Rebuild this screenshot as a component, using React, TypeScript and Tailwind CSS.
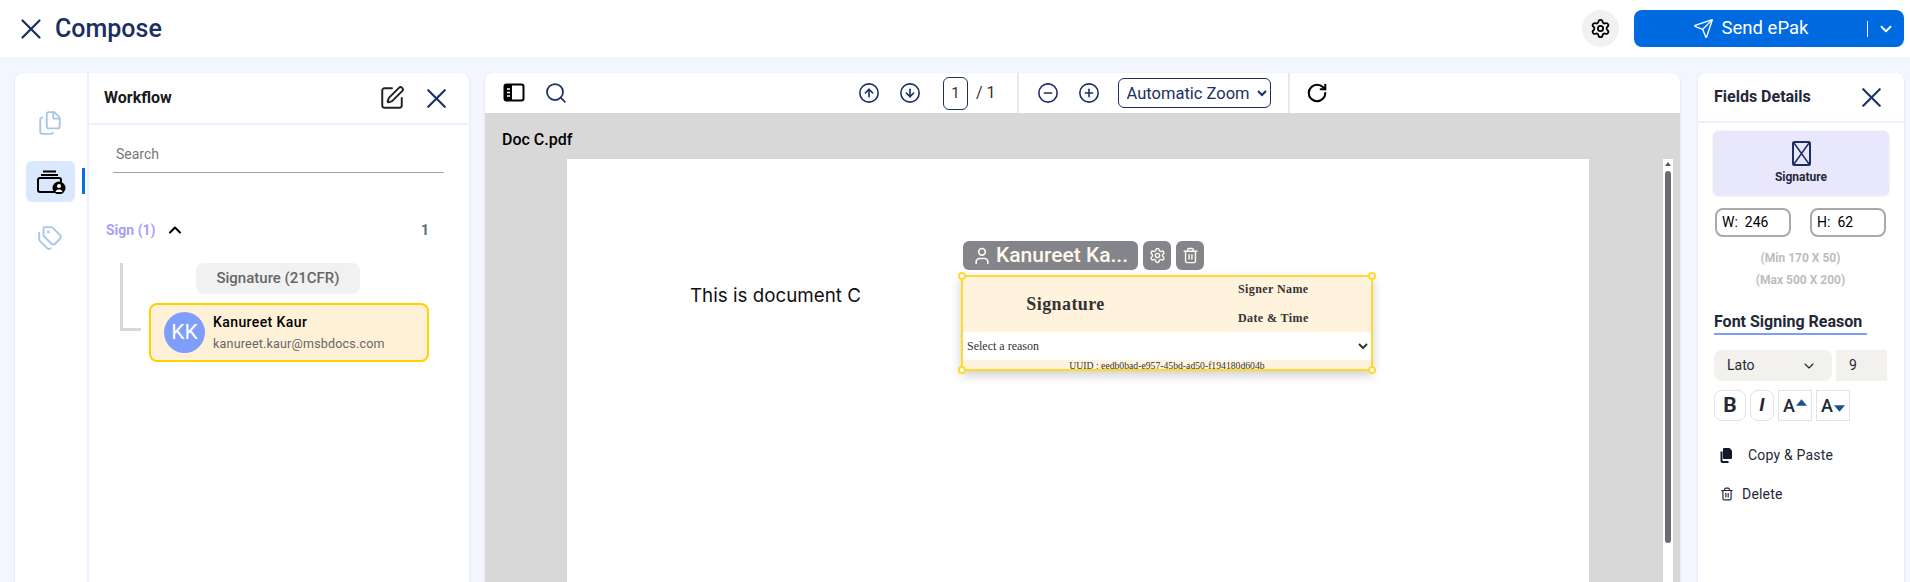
import { X, SquarePen, Files, Tags, Settings, Send, ChevronDown, ChevronUp, CircleArrowUp, CircleArrowDown, CircleMinus, CirclePlus, RotateCw, Search, User, Trash2 } from "lucide-react";

function Wallet() {
  return (
    <svg width="30" height="24" viewBox="0 0 30 24" fill="none" className="text-black">
      <path d="M7 1.500h13M5 5h17" stroke="currentColor" strokeWidth="2" />
      <path d="M20 22H4a2 2 0 0 1-2-2V10a2 2 0 0 1 2-2h19a2 2 0 0 1 2 2v2" stroke="currentColor" strokeWidth="2" />
      <circle cx="23" cy="18" r="6.500" fill="currentColor" />
      <circle cx="23" cy="16" r="2" fill="#fff" />
      <path d="M19.500 22c.500-2 2-2.500 3.500-2.500s3 .5 3.500 2.500z" fill="#fff" />
    </svg>
  );
}

function SidebarIcon() {
  return (
    <svg width="22" height="20" viewBox="0 0 22 20" fill="none">
      <rect x="1.500" y="1.500" width="19" height="16" rx="2" stroke="#000" strokeWidth="2" />
      <rect x="2" y="2" width="7" height="15" fill="#000" />
      <path d="M4 6h3M4 9.500h3M4 13h3" stroke="#fff" strokeWidth="1.500" />
    </svg>
  );
}

function PasteIcon() {
  return (
    <svg width="14" height="16" viewBox="0 0 14 16" fill="none">
      <path d="M5 1h5.500L13 3.500V11a1 1 0 0 1-1 1H5a1 1 0 0 1-1-1V2a1 1 0 0 1 1-1z" fill="#111827" />
      <path d="M2.500 4.500V14a1 1 0 0 0 1 1h6" stroke="#111827" strokeWidth="2" />
    </svg>
  );
}

function Caret({ up }: { up?: boolean }) {
  return (
    <svg width="11" height="7" viewBox="0 0 10 6">
      <path d={up ? "M5 0l5 6H0z" : "M0 0h10L5 6z"} fill="#1d4f91" />
    </svg>
  );
}

function ToolBtn({ children }: { children: React.ReactNode }) {
  return <span className="flex w-[41px] items-center justify-center text-[#1b2f63]">{children}</span>;
}

export default function App() {
  return (
    <div className="flex h-[582px] w-[1910px] flex-col overflow-hidden bg-[#f3f6fe] font-[family-name:Roboto] text-[#1f2937]">
      <header className="flex h-[57px] shrink-0 items-center bg-white pl-[14px] pr-[6px]">
        <X size={34} strokeWidth={1.600} className="text-[#1b2f63]" />
        <h1 className="ml-[7px] text-[25px] font-medium text-[#1b2f63]">Compose</h1>
        <span className="ml-auto flex h-[37px] w-[37px] items-center justify-center rounded-full bg-[#f1f1f1]">
          <Settings size={21} strokeWidth={2} className="text-black" />
        </span>
        <button className="ml-[15px] flex h-[37px] w-[270px] items-center rounded-lg bg-[#006be0] text-white">
          <span className="flex flex-1 items-center justify-center gap-[8px] text-[18.500px]">
            <Send size={21} strokeWidth={1.500} />
            Send ePak
          </span>
          <span className="h-[16px] w-px bg-white" />
          <span className="flex w-[36px] items-center justify-center">
            <ChevronDown size={18} strokeWidth={2.500} />
          </span>
        </button>
      </header>

      <main className="flex min-h-0 flex-1 pl-[15px] pr-[6px] pt-[16px]">
        <section className="flex w-[454px] shrink-0 rounded-t-lg bg-white shadow-sm">
          <nav className="flex w-[72px] shrink-0 flex-col items-center pr-[2px] pt-[37px]">
            <Files size={26} strokeWidth={1.750} className="text-[#a9c6ea]" />
            <div className="relative mt-[25px] flex w-full justify-center pl-[1px]">
              <span className="flex h-[41px] w-[49px] items-center justify-center rounded-md bg-[#d9e8fd]">
                <Wallet />
              </span>
              <span className="absolute right-0 top-[7px] h-[26px] w-[3px] bg-[#0b6fe0]" />
            </div>
            <Tags size={26} strokeWidth={1.750} className="mt-[23px] text-[#a9c6ea]" />
          </nav>
          <div className="flex min-w-0 flex-1 flex-col border-l-2 border-[#eaf0fd]">
            <div className="flex h-[52px] shrink-0 items-center border-b-2 border-[#eaf0fd] pl-[15px] pr-[16px]">
              <h2 className="text-[16px] font-bold text-[#1a1a1a]">Workflow</h2>
              <SquarePen size={26} strokeWidth={1.800} className="ml-auto text-[#222]" />
              <X size={33} strokeWidth={1.600} className="ml-[15px] text-[#1b2f63]" />
            </div>
            <div className="ml-[24px] mr-[25px] mt-[15px] h-[33px] border-b border-[#a3a3a3] pl-[3px] text-[14px] leading-[28px] text-[#777]">
              Search
            </div>
            <div className="ml-[17px] mr-[40px] mt-[47px] flex items-center text-[14px] font-bold leading-[20px]">
              <span className="text-[#a79ffc]">Sign (1)</span>
              <ChevronUp size={20} strokeWidth={2.500} className="ml-[9px] text-black" />
              <span className="ml-auto text-[#5d6b80]">1</span>
            </div>
            <div className="ml-[31px] mt-[23px] flex">
              <span className="h-[68px] w-[21px] shrink-0 border-b-[3px] border-l-[3px] border-[#d8d8d8]" />
              <div className="ml-[8px] flex w-[280px] flex-col gap-[9px]">
                <span className="ml-[47px] flex h-[31px] w-[164px] items-center justify-center rounded-lg bg-[#f1f1f1] text-[15px] font-medium text-[#666]">
                  Signature (21CFR)
                </span>
                <div className="flex h-[59px] w-[280px] items-center rounded-lg border-2 border-[#ffd100] bg-[#fff0d8] pl-[13px]">
                  <span className="flex h-[41px] w-[41px] items-center justify-center rounded-full bg-[#7f9efc] text-[21px] text-white">KK</span>
                  <div className="ml-[8px]">
                    <div className="text-[14px] font-medium leading-[18px] tracking-[0.4px] text-black">Kanureet Kaur</div>
                    <div className="mt-[4px] text-[12.500px] leading-[18px] tracking-[0.2px] text-[#666]">kanureet.kaur@msbdocs.com</div>
                  </div>
                </div>
              </div>
            </div>
          </div>
        </section>

        <section className="ml-[16px] flex w-[1195px] shrink-0 flex-col overflow-hidden rounded-t-lg bg-[#d8d8d8] shadow-sm">
          <div className="flex h-[40px] shrink-0 items-center bg-white pl-[18px]">
            <SidebarIcon />
            <Search size={24} strokeWidth={1.750} className="ml-[19px] text-[#1b2f63]" />
            <div className="ml-[280px] flex">
              <ToolBtn><CircleArrowUp size={22} strokeWidth={1.750} /></ToolBtn>
              <ToolBtn><CircleArrowDown size={22} strokeWidth={1.750} /></ToolBtn>
            </div>
            <span className="ml-[13px] flex h-[33px] w-[25px] items-center justify-center rounded-md border border-[#1b2f63] text-[15px] text-[#333]">1</span>
            <span className="ml-[8px] text-[16px] text-[#333]">/ 1</span>
            <span className="ml-[21px] h-full w-[2px] bg-[#e8e8e8]" />
            <div className="ml-[9px] flex">
              <ToolBtn><CircleMinus size={22} strokeWidth={1.750} /></ToolBtn>
              <ToolBtn><CirclePlus size={22} strokeWidth={1.750} /></ToolBtn>
            </div>
            <select className="ml-[8px] h-[30px] w-[153px] rounded-md border border-[#1b2f63] bg-white pl-[4px] text-[16.500px] text-[#1b2f63]">
              <option>Automatic Zoom</option>
            </select>
            <span className="ml-[17px] h-full w-[2px] bg-[#e8e8e8]" />
            <RotateCw size={22} strokeWidth={2.250} className="ml-[16px] text-black" />
          </div>
          <div className="flex min-h-0 flex-1">
            <div className="flex min-w-0 flex-1 flex-col">
              <div className="h-[46px] shrink-0 pl-[17px] pt-[17px] text-[16px] font-medium leading-[20px] text-black">Doc C.pdf</div>
              <div className="relative ml-[82px] w-[1022px] flex-1 bg-white">
                <p className="absolute left-[123px] top-[125px] font-[family-name:Inter] text-[18.800px] leading-[24px] text-[#111]">This is document C</p>
                <div className="absolute left-[396px] top-[82px] flex gap-[5px]">
                  <span className="flex h-[29px] w-[175px] items-center gap-[4px] rounded-md bg-[#84858a] pl-[9px] text-[21px] font-medium text-[#fff8ec]">
                    <User size={20} strokeWidth={2} />
                    Kanureet Ka...
                  </span>
                  <span className="flex h-[29px] w-[28px] items-center justify-center rounded-md bg-[#84858a] text-[#fff8ec]"><Settings size={17} /></span>
                  <span className="flex h-[29px] w-[28px] items-center justify-center rounded-md bg-[#84858a] text-[#fff8ec]"><Trash2 size={17} /></span>
                </div>
                <div className="absolute left-[394px] top-[116px] flex h-[96px] w-[412px] flex-col border-2 border-[#ffd92e] bg-[#fff3de] font-[family-name:'Liberation_Serif'] text-[#333] shadow-[0_4px_10px_rgba(0,0,0,0.2)]">
                  <div className="flex h-[55px] shrink-0">
                    <div className="flex w-[275px] items-center justify-center pr-[70px] text-[18px] font-bold tracking-[0.4px]">Signature</div>
                    <div className="flex flex-col gap-[15px] pt-[5px] text-[12px] font-bold leading-[14px] tracking-[0.4px]">
                      <span>Signer Name</span>
                      <span>Date &amp; Time</span>
                    </div>
                  </div>
                  <select className="h-[28px] w-full shrink-0 bg-white text-[12px] text-[#333]">
                    <option>Select a reason</option>
                  </select>
                  <div className="text-center text-[9.700px] leading-[11px]">UUID : eedb0bad-e957-45bd-ad50-f194180d604b</div>
                  <span className="absolute -left-[5px] -top-[5px] h-[8px] w-[8px] rounded-full border-2 border-[#ffd92e] bg-white" />
                  <span className="absolute -right-[5px] -top-[5px] h-[8px] w-[8px] rounded-full border-2 border-[#ffd92e] bg-white" />
                  <span className="absolute -bottom-[5px] -left-[5px] h-[8px] w-[8px] rounded-full border-2 border-[#ffd92e] bg-white" />
                  <span className="absolute -bottom-[5px] -right-[5px] h-[8px] w-[8px] rounded-full border-2 border-[#ffd92e] bg-white" />
                </div>
              </div>
            </div>
            <div className="mr-[7px] mt-[46px] flex w-[10px] shrink-0 flex-col items-start bg-white pl-[2px]">
              <span className="mt-[3px] h-0 w-0 border-x-[3px] border-b-[4px] border-x-transparent border-b-[#555]" />
              <span className="mt-[5px] h-[372px] w-[6px] rounded-full bg-[#6a6c71]" />
            </div>
          </div>
        </section>

        <aside className="ml-[18px] flex w-[206px] shrink-0 flex-col rounded-t-lg bg-white shadow-sm">
          <div className="flex h-[50px] shrink-0 items-center border-b-2 border-[#eaf0fd] pl-[16px] pr-[16px]">
            <h2 className="text-[16px] font-bold text-[#1f2937]">Fields Details</h2>
            <X size={33} strokeWidth={1.600} className="ml-auto text-[#1b2f63]" />
          </div>
          <div className="mx-[15px] mt-[8px] flex h-[65px] flex-col items-center rounded-md bg-[#e9e7fc] pt-[10px] shadow-[0_0_2px_rgba(0,0,0,0.15)]">
            <svg width="19" height="25" viewBox="0 0 19 25" fill="none">
              <rect x="1" y="1" width="17" height="23" rx="1.500" stroke="#1b2f63" strokeWidth="2" />
              <path d="M2 2l15 21M17 2L2 23" stroke="#1b2f63" strokeWidth="1.500" />
            </svg>
            <span className="mt-[3px] text-[12px] font-bold leading-[16px]">Signature</span>
          </div>
          <div className="ml-[17px] mt-[12px] flex gap-[19px]">
            <span className="flex h-[29px] w-[76px] items-center gap-[7px] rounded-lg border-2 border-[#aaa] pl-[5px] text-[14px] text-black"><span>W:</span><span>246</span></span>
            <span className="flex h-[29px] w-[76px] items-center gap-[7px] rounded-lg border-2 border-[#aaa] pl-[5px] text-[14px] text-black"><span>H:</span><span>62</span></span>
          </div>
          <div className="ml-[15px] mt-[10px] w-[175px] text-center text-[12px] font-bold leading-[22px] text-[#bdbdbd]">
            <div>(Min 170 X 50)</div>
            <div>(Max 500 X 200)</div>
          </div>
          <h3 className="ml-[16px] mt-[20px] w-[153px] whitespace-nowrap border-b-2 border-[#7f9efc] text-[16px] font-bold leading-[22px] text-[#1f2937]">Font Signing Reason</h3>
          <div className="ml-[16px] mt-[15px] flex gap-[4px] text-[14px]">
            <span className="flex h-[31px] w-[118px] items-center justify-between rounded-lg bg-[#f2f1ee] pl-[13px] pr-[15px]">
              Lato
              <ChevronDown size={16} strokeWidth={1.750} />
            </span>
            <span className="flex h-[31px] w-[51px] items-center bg-[#f2f1ee] pl-[13px]">9</span>
          </div>
          <div className="ml-[16px] mt-[9px] flex gap-[4px]">
            <span className="flex h-[31px] w-[32px] items-center justify-center rounded-lg border border-[#e0e3ea] text-[21px] font-bold">B</span>
            <span className="flex h-[31px] w-[24px] items-center justify-center rounded-lg border border-[#e0e3ea] text-[19px] font-bold italic">I</span>
            <span className="flex h-[31px] w-[34px] items-center justify-center gap-px border border-[#e0e3ea] text-[18px] font-medium">A<span className="-mt-[6px]"><Caret up /></span></span>
            <span className="flex h-[31px] w-[34px] items-center justify-center gap-px border border-[#e0e3ea] text-[18px] font-medium">A<span className="mt-[5px]"><Caret /></span></span>
          </div>
          <div className="ml-[21px] mt-[24px] flex items-center text-[14px] leading-[20px] tracking-[0.2px]">
            <PasteIcon />
            <span className="ml-[15px]">Copy &amp; Paste</span>
          </div>
          <div className="ml-[22px] mt-[19px] flex items-center text-[14px] leading-[20px] tracking-[0.2px]">
            <Trash2 size={14} strokeWidth={2} />
            <span className="ml-[8px]">Delete</span>
          </div>
        </aside>
      </main>
    </div>
  );
}
